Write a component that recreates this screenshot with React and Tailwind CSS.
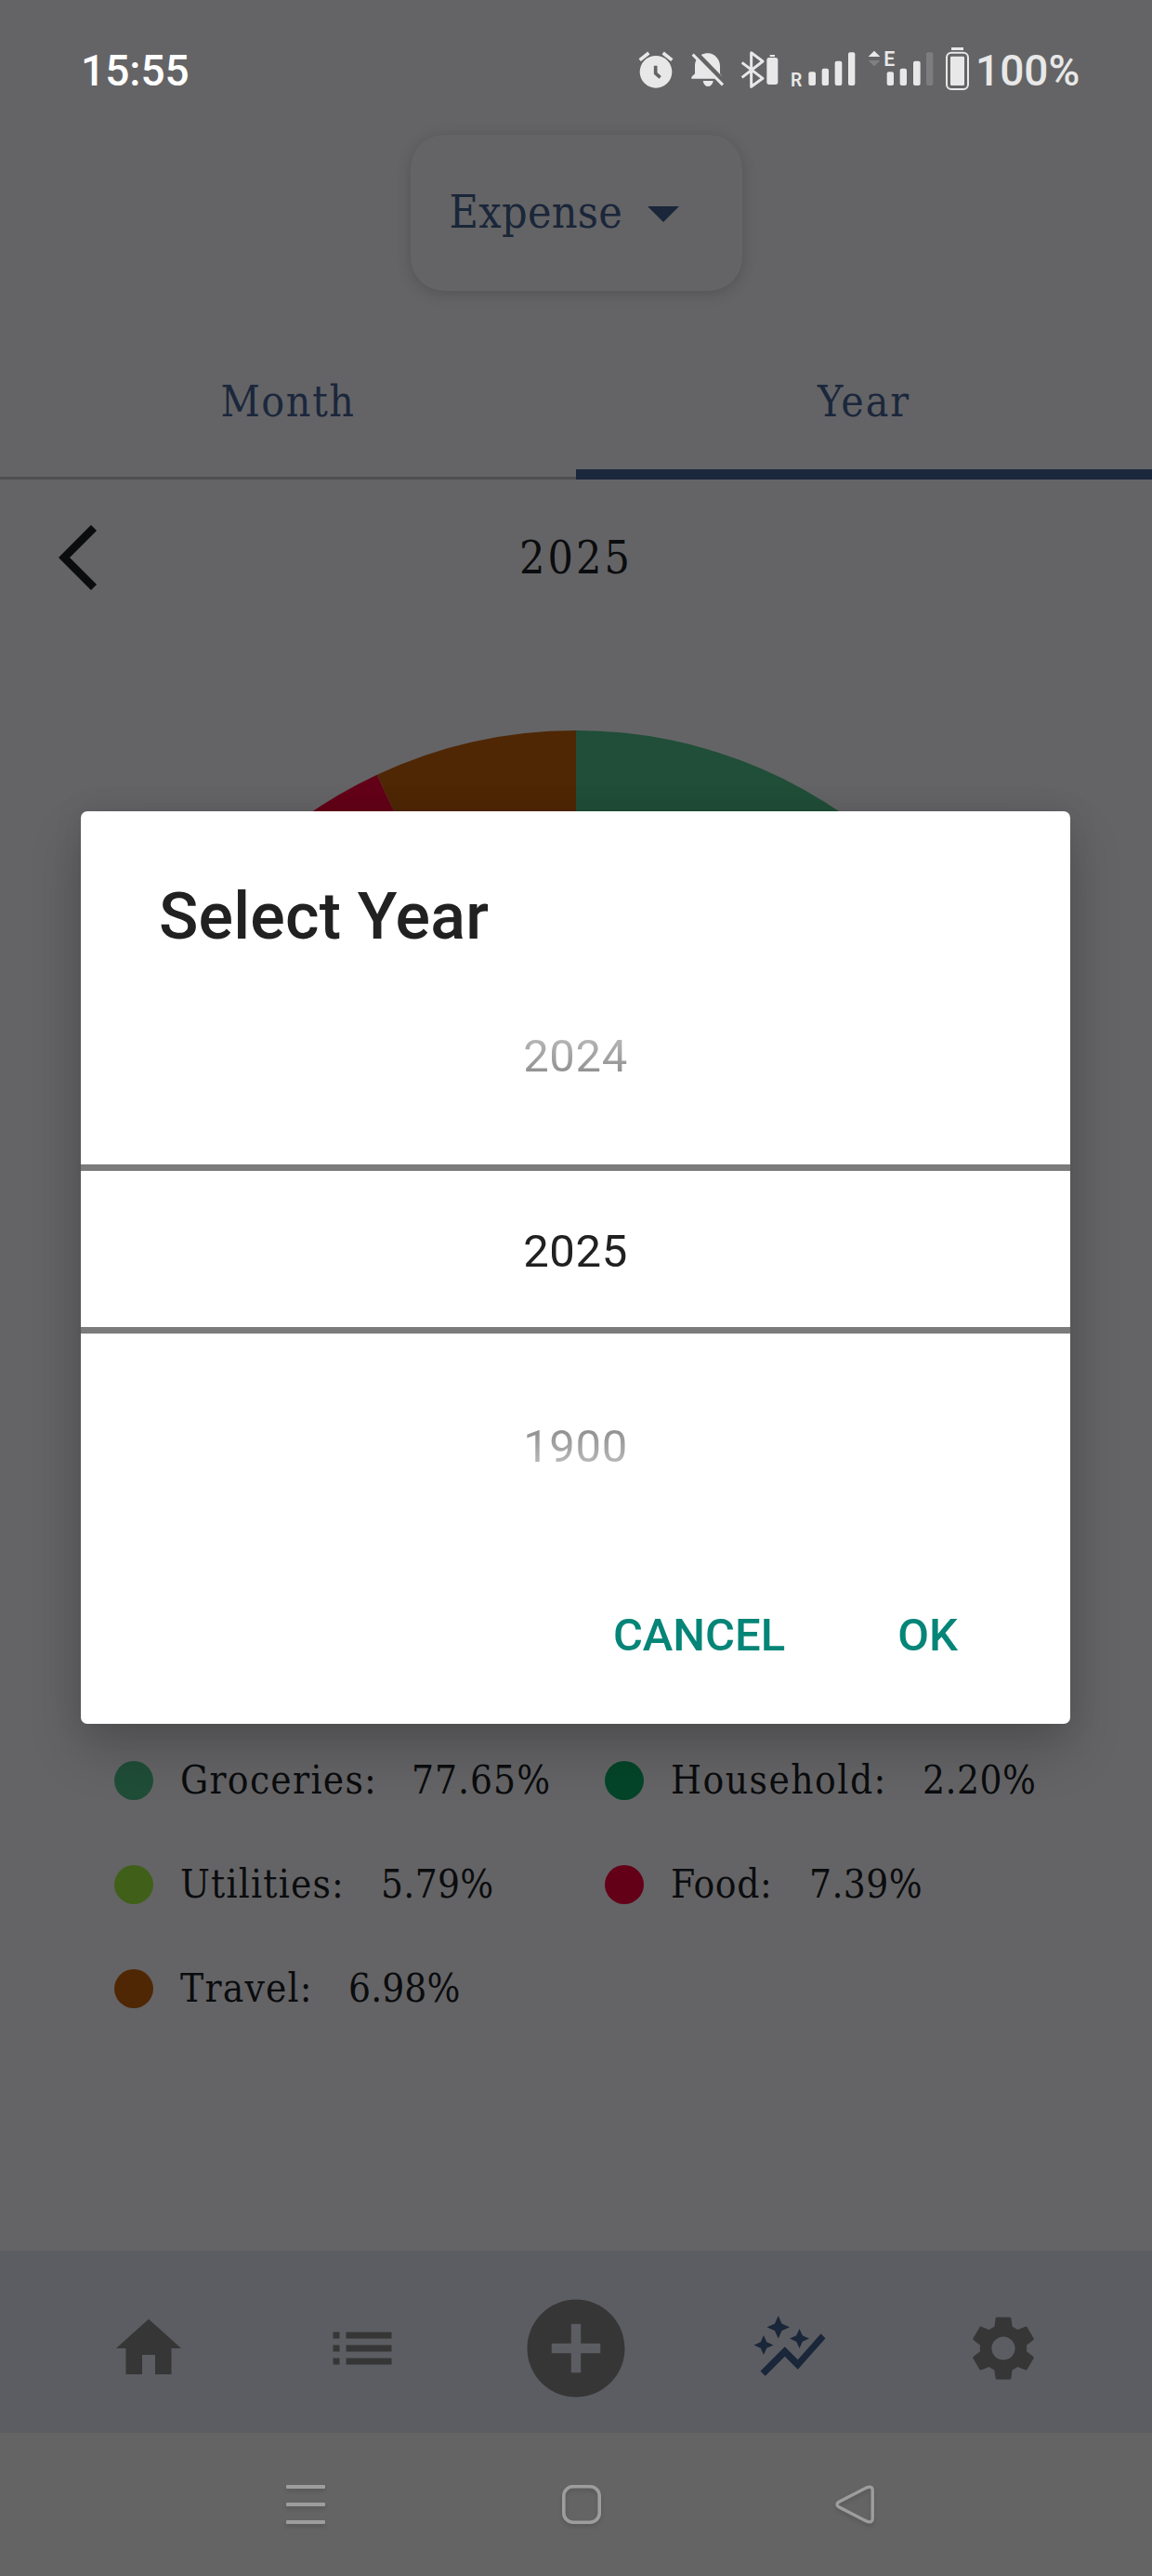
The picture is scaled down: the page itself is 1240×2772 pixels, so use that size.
import React from "react";
import { MdHome, MdList, MdAddCircle, MdAutoGraph, MdSettings } from "react-icons/md";

const SERIF = "font-['DejaVu_Serif_Condensed','DejaVu_Serif',serif] [font-stretch:condensed]";

const slices = [
  { value: 77.65, color: "#204e38" },
  { value: 2.2, color: "#04452a" },
  { value: 5.79, color: "#406019" },
  { value: 7.39, color: "#630018" },
  { value: 6.99, color: "#4f2705" },
];

const legend = [
  { name: "Groceries:", value: "77.65%", dot: "bg-[#1f4d38]", nameCls: "w-[249px] tracking-[1.3px]", valCls: "tracking-[1px]" },
  { name: "Household:", value: "2.20%", dot: "bg-[#044529]", nameCls: "w-[271px] tracking-[1.5px]", valCls: "tracking-[0.5px]" },
  { name: "Utilities:", value: "5.79%", dot: "bg-[#406019]", nameCls: "w-[216px] tracking-[1.2px]", valCls: "tracking-[0.3px]" },
  { name: "Food:", value: "7.39%", dot: "bg-[#630018]", nameCls: "w-[149px] tracking-[0.6px]", valCls: "tracking-[0.4px]" },
  { name: "Travel:", value: "6.98%", dot: "bg-[#4f2705]", nameCls: "w-[181px] tracking-[1.2px]", valCls: "tracking-[0.1px]" },
];

function StatusBar() {
  return (
    <header className="flex h-[150px] shrink-0 items-start pt-[30px] pl-[87px] font-[Roboto,sans-serif] text-[46px] leading-[92px] font-medium [font-stretch:normal] text-[#e8e8e8]">
      <div className="w-[593px] text-white">15:55</div>
      <svg className="h-[90px] w-[370px]" viewBox="60 0 1110 270" fill="#e8e8e8">
        {/* alarm */}
        <circle cx="138" cy="142" r="52" />
        <path d="M86 104L115 81M190 104L161 81" stroke="#e8e8e8" strokeWidth="11" fill="none" />
        <path d="M137 122V147L152 160" stroke="#646466" strokeWidth="11" fill="none" />
        {/* muted bell */}
        <path d="M284 87C318 71 345 96 345 124V148L354 159ZM269 102L330 164H253V158L264 148V122C264 114 266 108 269 102Z" />
        <path d="M290 171H323C321 183 313 189 306 189C299 189 292 183 290 171Z" />
        <path d="M257 86L354 184" stroke="#e8e8e8" strokeWidth="9" fill="none" />
        {/* bluetooth with device battery */}
        <path d="M416 112L483 163L446 190V80L483 108L416 160" stroke="#e8e8e8" strokeWidth="9" strokeLinejoin="round" fill="none" />
        <rect x="506" y="87" width="16" height="6" />
        <rect x="496" y="96" width="36" height="87" rx="8" />
        {/* first signal */}
        <text x="573" y="188" fontSize="62" fontWeight="600" textLength="37" lengthAdjust="spacingAndGlyphs">R</text>
        <rect x="631" y="142" width="23" height="44" rx="6" />
        <rect x="674" y="131" width="22" height="55" rx="6" />
        <rect x="716" y="107" width="23" height="79" rx="6" />
        <rect x="759" y="79" width="22" height="107" rx="6" />
        {/* second signal */}
        <path d="M824 93L843 74L862 93Z" />
        <path d="M824 105H862L843 124Z" fill="#808082" />
        <text x="874" y="123" fontSize="67" fontWeight="600" textLength="36" lengthAdjust="spacingAndGlyphs">E</text>
        <rect x="884" y="142" width="22" height="44" rx="6" />
        <rect x="926" y="131" width="22" height="55" rx="6" />
        <rect x="969" y="107" width="23" height="79" rx="6" />
        <rect x="1011" y="79" width="22" height="107" rx="6" fill="#7d7d7f" />
        {/* battery */}
        <rect x="1092" y="63" width="39" height="9" />
        <rect x="1077" y="80" width="69" height="118" rx="15" fill="none" stroke="#e8e8e8" strokeWidth="6" />
        <rect x="1089" y="92" width="45" height="94" rx="4" />
      </svg>
      <div className="whitespace-nowrap">100%</div>
    </header>
  );
}

function PieChart() {
  let acc = 0;
  const point = (v) => {
    const a = (v / 100.02) * Math.PI * 2;
    return `${504 + 504 * Math.sin(a)} ${504 - 504 * Math.cos(a)}`;
  };
  return (
    <svg className="mx-auto block h-[1008px] w-[1008px]" viewBox="0 0 1008 1008">
      {slices.map((s) => {
        const start = point(acc);
        acc += s.value;
        return (
          <path key={s.color} fill={s.color} d={`M504 504L${start}A504 504 0 ${s.value > 50 ? 1 : 0} 1 ${point(acc)}Z`} />
        );
      })}
    </svg>
  );
}

function BottomNav() {
  return (
    <nav className="grid h-[196px] shrink-0 grid-cols-5 items-center bg-[#5c5d62] px-[45px] pt-[14px] text-[84px] text-[#363636]">
      <div className="flex justify-center"><MdHome /></div>
      <div className="flex justify-center"><MdList /></div>
      <div className="flex justify-center text-[126px]"><MdAddCircle /></div>
      <div className="flex justify-center text-[#1a2639]"><MdAutoGraph /></div>
      <div className="flex justify-center"><MdSettings /></div>
    </nav>
  );
}

function SystemNav() {
  return (
    <div className="flex h-[154px] shrink-0 items-center bg-[#646464] pl-[304px]">
      <svg className="h-[50px] w-[50px] drop-shadow-[0_3px_2px_rgba(0,0,0,0.12)]" viewBox="0 0 50 50" fill="#9d9d9d">
        <rect x="4" y="4" width="42" height="4" rx="1" />
        <rect x="4" y="23" width="42" height="4" rx="1" />
        <rect x="4" y="42" width="42" height="4" rx="1" />
      </svg>
      <svg className="ml-[247px] h-[50px] w-[50px] drop-shadow-[0_3px_2px_rgba(0,0,0,0.12)]" viewBox="0 0 50 50" fill="none" stroke="#9d9d9d" strokeWidth="3.6">
        <rect x="5.8" y="5.8" width="38.4" height="38.4" rx="10" />
      </svg>
      <svg className="ml-[245px] h-[50px] w-[50px] drop-shadow-[0_3px_2px_rgba(0,0,0,0.12)]" viewBox="0 0 50 50" fill="none" stroke="#9d9d9d" strokeWidth="3.4">
        <path d="M6.5 22.5L37 6.8Q43.2 4.5 43.2 10V40Q43.2 45.5 37 43.2L6.5 27.5Q3.5 25 6.5 22.5Z" />
      </svg>
    </div>
  );
}

function YearDialog() {
  return (
    <div className="absolute inset-0 flex items-start justify-center pt-[873px] pr-px font-[Roboto,sans-serif] [font-stretch:normal] text-[#212121]">
      <section className="flex h-[982px] w-[1065px] flex-col rounded-[7px] bg-white shadow-[0_28px_56px_rgba(0,0,0,0.2),0_0_34px_rgba(0,0,0,0.08)]">
        <h1 className="h-[170px] pt-[72px] pl-[84px] text-[70px] leading-[82px] font-medium tracking-[0.2px]">Select Year</h1>
        <div className="flex h-[630px] flex-col text-center text-[49px] tracking-[0.6px]">
          <div className="h-[210px] bg-linear-to-b from-[#b5b5b5] from-36% to-[#919191] to-53% bg-clip-text pt-[64px] leading-[60px] text-transparent">2024</div>
          <div className="h-[182px] border-y-[7px] border-[#7b7b7b] pt-[57px] leading-[60px]">2025</div>
          <div className="bg-linear-to-b from-[#919191] from-54% to-[#b8b8b8] to-73% bg-clip-text pt-[92px] pb-[40px] leading-[60px] text-transparent">1900</div>
        </div>
        <div className="flex justify-end gap-[121px] pt-[57px] pr-[121px] text-[49px] leading-[60px] font-medium text-[#048577]">
          <button>CANCEL</button>
          <button>OK</button>
        </div>
      </section>
    </div>
  );
}

export default function App() {
  return (
    <div className={`relative flex h-[2772px] w-[1240px] flex-col overflow-hidden bg-[#646466] text-[#0b0c0e] ${SERIF}`}>
      <StatusBar />
      <div className="-mt-[5px] flex h-[168px] shrink-0 justify-center">
        <button className="flex w-[357px] items-center gap-[27px] rounded-[36px] bg-[#646466] pl-[42px] text-[48px] leading-[60px] text-[#1a2639] shadow-[0_3px_16px_rgba(0,0,0,0.17)]">
          <span className="-mt-[3px] tracking-[0.3px]">Expense</span>
          <svg className="mt-[3px] h-[17px] w-[34px]" viewBox="0 0 34 17" fill="currentColor"><path d="M0 0H34L17 17Z" /></svg>
        </button>
      </div>
      <div className="flex h-[203px] shrink-0 text-center text-[46px] leading-[60px] text-[#1b273c]">
        <div className="flex-1 border-b-[3px] border-[#4f4f51] pt-[89px] tracking-[1.6px]">Month</div>
        <div className="flex-1 border-b-[11px] border-[#1b273c] pt-[89px] tracking-[1.9px]">Year</div>
      </div>
      <div className="grid h-[168px] shrink-0 grid-cols-[1fr_auto_1fr] items-center pl-[63px]">
        <svg className="h-[70px] w-[42px]" viewBox="0 0 42 70" fill="none" stroke="currentColor" strokeWidth="8.6"><path d="M38 3L6 35L38 67" /></svg>
        <div className="pr-[63px] text-[48px] leading-[60px] tracking-[3px]">2025</div>
      </div>
      <div className="mt-[102px] shrink-0">
        <PieChart />
      </div>
      <div className="mt-[66px] grid h-[562px] shrink-0 grid-cols-[528px_1fr] content-start pl-[123px] text-[42px] leading-[112px]">
        {legend.map((l) => (
          <div key={l.name} className="flex h-[112px] items-center whitespace-nowrap">
            <span className={`mr-[29px] h-[42px] w-[42px] rounded-full ${l.dot}`} />
            <span className={l.nameCls}>{l.name}</span>
            <span className={l.valCls}>{l.value}</span>
          </div>
        ))}
      </div>
      <BottomNav />
      <SystemNav />
      <YearDialog />
    </div>
  );
}
